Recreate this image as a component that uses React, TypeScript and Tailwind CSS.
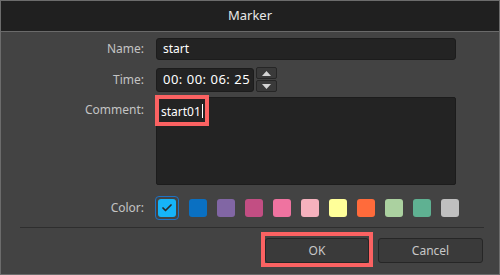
import { Check } from "lucide-react";

const swatches = [
  "#0a70c2",
  "#8166a4",
  "#c24e83",
  "#ef73a0",
  "#f5b1bd",
  "#ffff99",
  "#ff6b3b",
  "#abd1a0",
  "#5fb192",
  "#bfbfbf",
];

function Label({ children }: { children: React.ReactNode }) {
  return (
    <div className="w-[124px] shrink-0 text-right text-[12px] text-[#c4c4c4]">
      {children}
    </div>
  );
}

function Spin({ up }: { up?: boolean }) {
  return (
    <div className="flex h-[12px] w-[21px] items-center justify-center rounded-[2px] border border-[#262626] bg-[#3a3a3a]">
      <svg width="9" height="5" viewBox="0 0 9 5">
        <polygon points={up ? "0,5 9,5 4.5,0" : "0,0 9,0 4.5,5"} fill="#d4d4d4" />
      </svg>
    </div>
  );
}

export default function App() {
  return (
    <div
      className="relative h-[275px] w-[500px] overflow-hidden border border-[#6c6c6c] bg-[#434343]"
      style={{ fontFamily: '"Noto Sans", "Open Sans", sans-serif' }}
    >
      {/* タイトルバー */}
      <div className="flex h-[31px] items-center justify-center border-b border-[#6a6a6a] bg-[#202020] text-[13px] text-[#e8e8e8]">
        Marker
      </div>

      <div className="pl-[19px]">
        {/* Name */}
        <div className="mt-[6px] flex items-center gap-[12px]">
          <Label>Name:</Label>
          <div className="flex h-[22px] w-[300px] items-center rounded-[3px] border border-[#1c1c1c] bg-[#232323] px-[6px] text-[12px] text-white">
            start
          </div>
        </div>

        {/* Time */}
        <div className="mt-[7px] flex items-center gap-[12px]">
          <Label>Time:</Label>
          <div className="flex items-center gap-[2px]">
            <div className="flex h-[24px] w-[98px] items-center whitespace-nowrap rounded-[3px] border border-[#1c1c1c] bg-[#232323] pl-[6px] text-[13px] tracking-[0.5px] text-white">
              00:&nbsp;00:&nbsp;06:&nbsp;25
            </div>
            <div className="flex flex-col gap-[1px]">
              <Spin up />
              <Spin />
            </div>
          </div>
        </div>

        {/* Comment */}
        <div className="mt-[5px] flex items-start gap-[12px]">
          <div className="pt-[4px]">
            <Label>Comment:</Label>
          </div>
          <div className="relative h-[88px] w-[300px] rounded-[2px] border border-[#1c1c1c] bg-[#232323] px-[4px] pt-[4px] text-[12px] text-white">
            <span>start01</span>
            <span className="ml-[1px] inline-block h-[14px] w-px translate-y-[2px] bg-white" />
            <div className="absolute left-[-2px] top-[-3px] h-[31px] w-[54px] border-[4px] border-[#fb6262]" />
          </div>
        </div>

        {/* Color */}
        <div className="mt-[11px] flex items-center gap-[12px]">
          <Label>Color:</Label>
          <div className="-ml-[1px] flex items-center gap-[10px]">
            <div className="flex h-[24px] w-[24px] items-center justify-center rounded-[4px] border border-[#1d72c4] p-[2px]">
              <div className="flex h-[18px] w-[18px] items-center justify-center rounded-[3px] bg-[#16b4f8]">
                <Check className="h-3 w-3 text-[#2a2a2a]" strokeWidth={3.5} />
              </div>
            </div>
            <div className="flex gap-[10px]">
              {swatches.map((c) => (
                <div key={c} className="h-[18px] w-[18px] rounded-[3px]" style={{ backgroundColor: c }} />
              ))}
            </div>
          </div>
        </div>

        {/* 区切り線 */}
        <div className="mt-[7px] mr-[15px] border-t border-[#2e2e2e]" />

        {/* ボタン */}
        <div className="mt-[10px] mr-[16px] flex justify-end gap-[9px]">
          <div className="relative">
            <button className="flex h-[25px] w-[104px] items-center justify-center rounded-[3px] border border-[#262626] bg-[#3a3a3a] text-[12px] text-[#c8c8c8]">
              OK
            </button>
            <div className="absolute left-[-4px] top-[-6px] h-[35px] w-[112px] border-[4px] border-[#fb6262]" />
          </div>
          <button className="flex h-[25px] w-[105px] items-center justify-center rounded-[3px] border border-[#262626] bg-[#3a3a3a] text-[12px] text-[#c8c8c8]">
            Cancel
          </button>
        </div>
      </div>
    </div>
  );
}
